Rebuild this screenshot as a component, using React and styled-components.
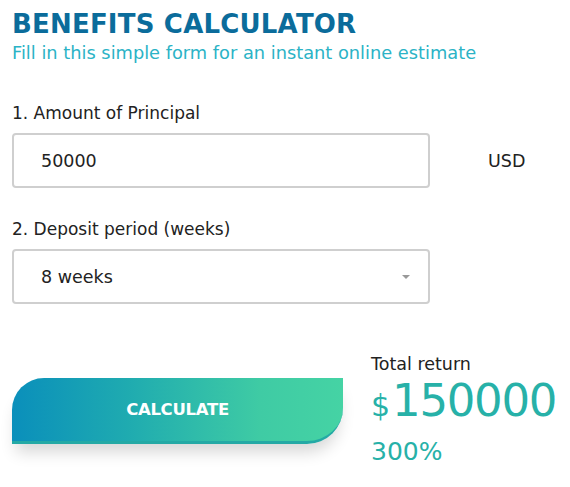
import React from "react";
import styled, { createGlobalStyle } from "styled-components";

const GlobalStyle = createGlobalStyle`
  body {
    margin: 0;
    background: #fff;
    font-family: "DejaVu Sans", "Liberation Sans", sans-serif;
  }
`;

const Page = styled.div`
  padding: 9px 0 0 12px;
  width: 558px;
`;

const Title = styled.h1`
  margin: 0;
  font-size: 26px;
  line-height: 30px;
  font-weight: 700;
  color: #0b6c9b;
  letter-spacing: 0.2px;
`;

const Subtitle = styled.p`
  margin: 2px 0 0;
  font-size: 17.8px;
  line-height: 24px;
  color: #2bb3c6;
`;

const Field = styled.div`
  margin-top: ${(p) => p.gap}px;
`;

const Label = styled.div`
  font-size: 17px;
  line-height: 22px;
  color: #222;
  margin-bottom: 9px;
`;

const Row = styled.div`
  display: flex;
  align-items: center;
`;

const Box = styled.div`
  box-sizing: border-box;
  width: 418px;
  height: 55px;
  border: 2px solid #cfcfcf;
  border-radius: 4px;
  display: flex;
  align-items: center;
  justify-content: space-between;
  padding: 0 18px 0 27px;
  font-size: 17.5px;
  color: #222;
`;

const Unit = styled.span`
  margin-left: 58px;
  font-size: 17.5px;
  color: #222;
`;

const Caret = styled.span`
  width: 0;
  height: 0;
  border-left: 4px solid transparent;
  border-right: 4px solid transparent;
  border-top: 4px solid #999;
`;

const Bottom = styled.div`
  display: flex;
  margin-top: 50px;
`;

const ButtonWrap = styled.div`
  padding-top: 24px;
`;

const CalcButton = styled.button`
  width: 331px;
  height: 66px;
  border: none;
  border-bottom: 3px solid #24a9a5;
  border-radius: 32px 0 36px 0;
  background: linear-gradient(90deg, #0a8fbb 0%, #1fabb0 35%, #3fcba4 75%, #45d3a4 100%);
  box-shadow: 0 12px 16px -4px rgba(0, 0, 0, 0.16);
  color: #fff;
  font-family: inherit;
  font-size: 16.5px;
  font-weight: 700;
  letter-spacing: -0.3px;
  cursor: pointer;
`;

const Result = styled.div`
  margin-left: 28px;
  color: #27b1a8;
`;

const ResultLabel = styled.div`
  font-size: 17.5px;
  line-height: 20px;
  color: #222;
`;

const Amount = styled.div`
  display: flex;
  align-items: baseline;
  font-size: 45px;
  line-height: 50px;
  margin-top: 2px;
  letter-spacing: -1.3px;
`;

const Dollar = styled.span`
  font-size: 30px;
  margin-right: 2px;
  letter-spacing: 0;
`;

const Percent = styled.div`
  font-size: 25px;
  line-height: 30px;
  margin-top: 6px;
`;

const App = () => {
  return (
    <>
      <GlobalStyle />
      <Page>
        <Title>BENEFITS CALCULATOR</Title>
        <Subtitle>Fill in this simple form for an instant online estimate</Subtitle>

        <Field gap={37}>
          <Label>1. Amount of Principal</Label>
          <Row>
            <Box>50000</Box>
            <Unit>USD</Unit>
          </Row>
        </Field>

        <Field gap={30}>
          <Label>2. Deposit period (weeks)</Label>
          <Box>
            8 weeks
            <Caret />
          </Box>
        </Field>

        <Bottom>
          <ButtonWrap>
            <CalcButton>CALCULATE</CalcButton>
          </ButtonWrap>
          <Result>
            <ResultLabel>Total return</ResultLabel>
            <Amount>
              <Dollar>$</Dollar>150000
            </Amount>
            <Percent>300%</Percent>
          </Result>
        </Bottom>
      </Page>
    </>
  );
};

export default App;
